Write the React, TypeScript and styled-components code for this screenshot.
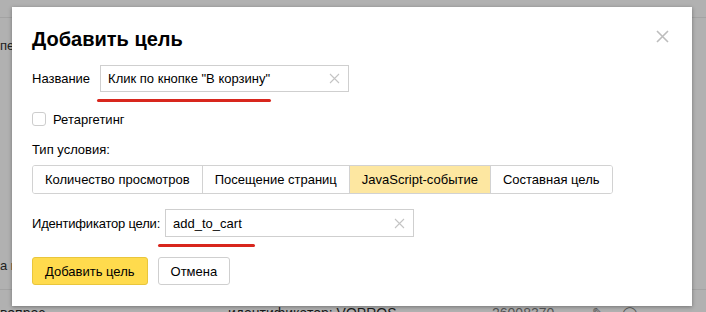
import React from 'react';
import styled, { createGlobalStyle } from 'styled-components';

const GlobalStyle = createGlobalStyle`
  body {
    margin: 0;
    font-family: 'Liberation Sans', Arial, sans-serif;
    overflow: hidden;
  }
`;

const ClearIcon = () => (
  <svg width="11" height="11" viewBox="0 0 11 11">
    <path d="M1 1L10 10M10 1L1 10" stroke="#c4c4c4" strokeWidth="1.1" />
  </svg>
);

const CloseIcon = () => (
  <svg width="13" height="13" viewBox="0 0 13 13">
    <path d="M1 1L12 12M12 1L1 12" stroke="#bdbdbd" strokeWidth="1.6" />
  </svg>
);

const segments = [
  'Количество просмотров',
  'Посещение страниц',
  'JavaScript-событие',
  'Составная цель',
];

const App = () => {
  return (
    <>
      <GlobalStyle />
      <Page>
        <Backdrop>
          <BgRow $h={17} $line />
          <BgRow $h={55}>
            <BgClip>пе</BgClip>
          </BgRow>
          <BgRow $h={177} />
          <BgRow $h={30}>
            <BgClip>а в</BgClip>
          </BgRow>
          <BgRow $h={9} $line />
          <BgBottom>
            <BgCell $w={228}>вопрос</BgCell>
            <BgCell $w={264}>идентификатор: VOPROS</BgCell>
            <BgCell $w={100} $muted>
              26008370
            </BgCell>
            <BgCell $w={30} $muted>
              ✎
            </BgCell>
            <BgCell $w={30} $muted>
              ◯
            </BgCell>
          </BgBottom>
        </Backdrop>

        <Dialog>
          <CloseButton>
            <CloseIcon />
          </CloseButton>
          <Title>Добавить цель</Title>

          <FieldRow $top={14} $gap={10}>
            <Label>Название</Label>
            <Input>
              <span>Клик по кнопке "В корзину"</span>
              <ClearIcon />
            </Input>
          </FieldRow>
          <Mark $left={65} $width={174} />

          <CheckRow>
            <CheckBox />
            <Label>Ретаргетинг</Label>
          </CheckRow>

          <SectionLabel>Тип условия:</SectionLabel>
          <Segmented>
            {segments.map((s, i) => (
              <Segment key={s} $active={i === 2}>
                {s}
              </Segment>
            ))}
          </Segmented>

          <FieldRow $top={15} $gap={5}>
            <Label $tight>Идентификатор цели:</Label>
            <Input $height={28}>
              <span>add_to_cart</span>
              <ClearIcon />
            </Input>
          </FieldRow>
          <Mark $left={126} $width={97} />

          <Buttons>
            <Button $primary>Добавить цель</Button>
            <Button>Отмена</Button>
          </Buttons>
        </Dialog>
      </Page>
    </>
  );
};

export default App;

const Page = styled.div`
  position: relative;
  width: 706px;
  height: 312px;
  overflow: hidden;
  background: #b1b1b1;
`;

const Backdrop = styled.div`
  display: flex;
  flex-direction: column;
`;

const BgRow = styled.div<{ $h: number; $line?: boolean }>`
  display: flex;
  align-items: center;
  height: ${({ $h }) => $h}px;
  border-bottom: ${({ $line }) => ($line ? '1px solid #a3a3a3' : 'none')};
`;

const BgClip = styled.span`
  width: 12px;
  overflow: hidden;
  font-size: 13px;
  color: #222;
  white-space: nowrap;
`;

const BgBottom = styled.div`
  display: flex;
  padding-top: 15px;
  font-size: 14px;
  line-height: 16px;
`;

const BgCell = styled.span<{ $w: number; $muted?: boolean }>`
  flex: 0 0 ${({ $w }) => $w}px;
  color: ${({ $muted }) => ($muted ? '#555' : '#1a1a1a')};
  white-space: nowrap;
`;

const Dialog = styled.div`
  position: absolute;
  left: 12px;
  top: 7px;
  width: 680px;
  height: 299px;
  box-sizing: border-box;
  padding: 20px 20px;
  background: #fff;
  box-shadow: 0 1px 4px rgba(0, 0, 0, 0.35);
`;

const CloseButton = styled.div`
  position: absolute;
  top: 23px;
  right: 23px;
  display: flex;
`;

const Title = styled.h2`
  margin: 0;
  font-size: 20px;
  line-height: 24px;
  font-weight: 700;
  color: #000;
`;

const FieldRow = styled.div<{ $top: number; $gap: number }>`
  display: flex;
  align-items: center;
  gap: ${({ $gap }) => $gap}px;
  margin-top: ${({ $top }) => $top}px;
`;

const Label = styled.span<{ $tight?: boolean }>`
  font-size: 13px;
  color: #000;
  white-space: nowrap;
  letter-spacing: ${({ $tight }) => ($tight ? '-0.2px' : 'normal')};
`;

const Input = styled.div<{ $height?: number }>`
  display: flex;
  align-items: center;
  justify-content: space-between;
  box-sizing: border-box;
  width: 249px;
  height: ${({ $height }) => $height ?? 27}px;
  padding: 0 8px 0 7px;
  border: 1px solid #cfcfcf;
  font-size: 13px;
  color: #000;
`;

const Mark = styled.div<{ $left: number; $width: number }>`
  width: ${({ $width }) => $width}px;
  height: 3px;
  margin: 7px 0 0 ${({ $left }) => $left}px;
  border-radius: 2px;
  background: #d8261d;
`;

const CheckRow = styled.div`
  display: flex;
  align-items: center;
  gap: 7px;
  margin-top: 10px;
  height: 14px;
`;

const CheckBox = styled.div`
  box-sizing: border-box;
  width: 14px;
  height: 14px;
  border: 1px solid #cdcdcd;
  border-radius: 3px;
  background: #fff;
`;

const SectionLabel = styled.div`
  margin-top: 16px;
  font-size: 13px;
  line-height: 16px;
  color: #000;
`;

const Segmented = styled.div`
  display: inline-flex;
  margin-top: 7px;
  height: 29px;
  box-sizing: border-box;
  border: 1px solid #d2d2d2;
  border-radius: 3px;
  overflow: hidden;
`;

const Segment = styled.div<{ $active?: boolean }>`
  display: flex;
  align-items: center;
  padding: 0 12px;
  font-size: 13px;
  color: #000;
  white-space: nowrap;
  background: ${({ $active }) => ($active ? '#fde7a1' : '#fff')};
  & + & {
    border-left: 1px solid #d2d2d2;
  }
`;

const Buttons = styled.div`
  display: flex;
  gap: 10px;
  margin-top: 10px;
`;

const Button = styled.div<{ $primary?: boolean }>`
  display: flex;
  align-items: center;
  box-sizing: border-box;
  height: 28px;
  padding: 0 12px;
  border: 1px solid ${({ $primary }) => ($primary ? '#e9c63c' : '#cfcfcf')};
  border-radius: 3px;
  background: ${({ $primary }) => ($primary ? '#ffdb4d' : '#fff')};
  font-size: 13px;
  color: #000;
`;
